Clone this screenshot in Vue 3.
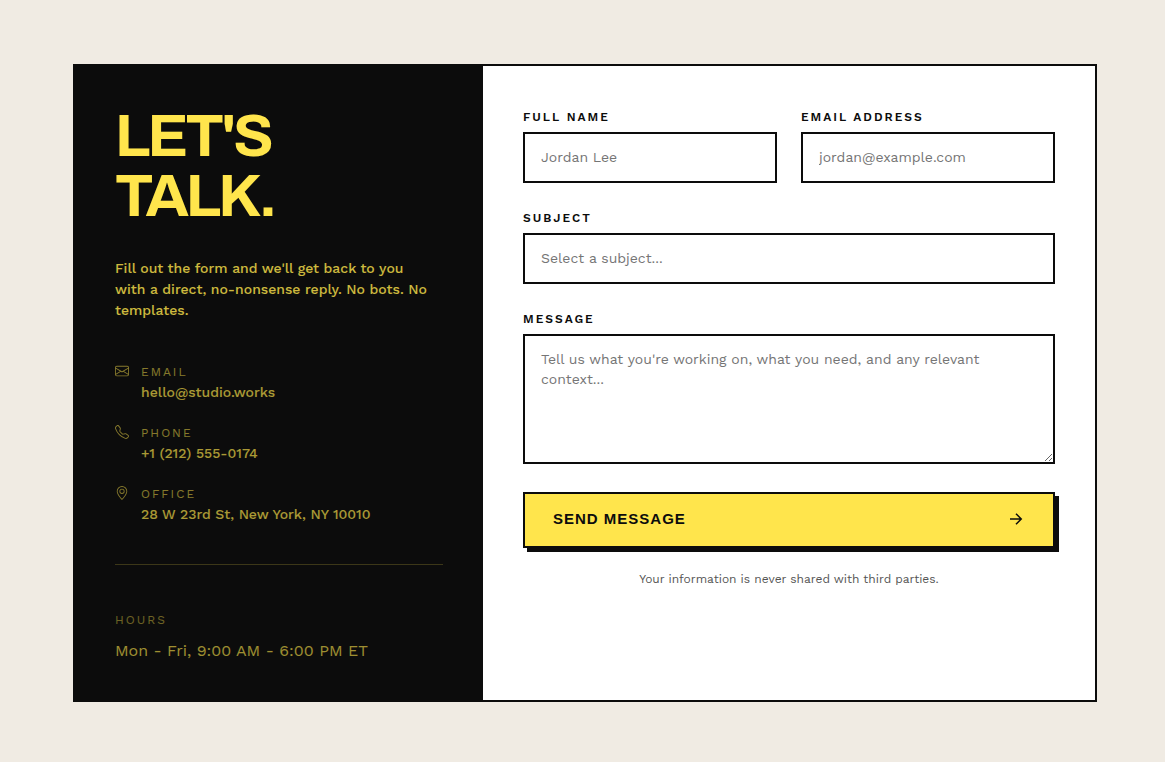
<script setup>
import { ref } from 'vue'

const contacts = [
  { id: 'email', label: 'Email', value: 'hello@studio.works' },
  { id: 'phone', label: 'Phone', value: '+1 (212) 555-0174' },
  { id: 'office', label: 'Office', value: '28 W 23rd St, New York, NY 10010' },
]

const icons = {
  email:
    'M0 4a2 2 0 0 1 2-2h12a2 2 0 0 1 2 2v8a2 2 0 0 1-2 2H2a2 2 0 0 1-2-2V4Zm2-1a1 1 0 0 0-1 1v.217l7 4.2 7-4.2V4a1 1 0 0 0-1-1H2Zm13 2.383-4.708 2.825L15 11.105V5.383Zm-.034 6.876-5.64-3.471L8 9.583l-1.326-.795-5.64 3.47A1 1 0 0 0 2 13h12a1 1 0 0 0 .966-.741ZM1 11.105l4.708-2.897L1 5.383v5.722Z',
  phone:
    'M3.654 1.328a.678.678 0 0 0-1.015-.063L1.605 2.3c-.483.484-.661 1.169-.45 1.77a17.568 17.568 0 0 0 4.168 6.608 17.569 17.569 0 0 0 6.608 4.168c.601.211 1.286.033 1.77-.45l1.034-1.034a.678.678 0 0 0-.063-1.015l-2.307-1.794a.678.678 0 0 0-.58-.122l-2.19.547a1.745 1.745 0 0 1-1.657-.459L5.482 8.062a1.745 1.745 0 0 1-.46-1.657l.548-2.19a.678.678 0 0 0-.122-.58L3.654 1.328ZM1.884.511a1.745 1.745 0 0 1 2.612.163L6.29 2.98c.329.423.445.974.315 1.494l-.547 2.19a.678.678 0 0 0 .178.643l2.457 2.457a.678.678 0 0 0 .644.178l2.189-.547a1.745 1.745 0 0 1 1.494.315l2.306 1.794c.829.645.905 1.87.163 2.611l-1.034 1.034c-.74.74-1.846 1.065-2.877.702a18.634 18.634 0 0 1-7.01-4.42 18.634 18.634 0 0 1-4.42-7.009c-.362-1.03-.037-2.137.703-2.877L1.885.511Z',
  office:
    'M12.166 8.94c-.524 1.062-1.234 2.12-1.96 3.07A31.493 31.493 0 0 1 8 14.58a31.481 31.481 0 0 1-2.206-2.57c-.726-.95-1.436-2.008-1.96-3.07C3.304 7.867 3 6.862 3 6a5 5 0 0 1 10 0c0 .862-.305 1.867-.834 2.94ZM8 16s6-5.686 6-10A6 6 0 0 0 2 6c0 4.314 6 10 6 10Z M8 8a2 2 0 1 1 0-4 2 2 0 0 1 0 4Zm0 1a3 3 0 1 0 0-6 3 3 0 0 0 0 6Z',
}

const form = ref({ name: '', email: '', subject: '', message: '' })
</script>

<template>
  <main class="page">
    <div class="card">
      <section class="intro">
        <h1 class="title">LET'S<br />TALK.</h1>
        <p class="lead">
          Fill out the form and we'll get back to you with a direct, no-nonsense reply. No bots. No templates.
        </p>
        <ul class="contacts">
          <li v-for="item in contacts" :key="item.id" class="contact">
            <svg class="contact-icon" viewBox="0 0 16 16" aria-hidden="true">
              <path :d="icons[item.id]" />
            </svg>
            <div>
              <div class="contact-label">{{ item.label }}</div>
              <div class="contact-value">{{ item.value }}</div>
            </div>
          </li>
        </ul>
        <div class="hours">
          <div class="hours-label">Hours</div>
          <div class="hours-value">Mon - Fri, 9:00 AM - 6:00 PM ET</div>
        </div>
      </section>

      <form class="form" @submit.prevent>
        <div class="row">
          <div class="field">
            <label for="name">Full name</label>
            <input id="name" v-model="form.name" type="text" placeholder="Jordan Lee" />
          </div>
          <div class="field">
            <label for="email">Email address</label>
            <input id="email" v-model="form.email" type="email" placeholder="jordan@example.com" />
          </div>
        </div>
        <div class="field">
          <label for="subject">Subject</label>
          <input id="subject" v-model="form.subject" type="text" placeholder="Select a subject..." />
        </div>
        <div class="field">
          <label for="message">Message</label>
          <textarea
            id="message"
            v-model="form.message"
            placeholder="Tell us what you're working on, what you need, and any relevant context..."
          ></textarea>
        </div>
        <button class="send" type="submit">
          <span>Send message</span>
          <svg class="arrow" viewBox="0 0 24 24" aria-hidden="true">
            <path d="M4 12h15M12 5l7 7-7 7" />
          </svg>
        </button>
        <p class="note">Your information is never shared with third parties.</p>
      </form>
    </div>
  </main>
</template>

<style>
body {
  margin: 0;
  background: #f0ebe3;
}
</style>

<style scoped>
* {
  box-sizing: border-box;
}

.page {
  display: flex;
  min-height: 100vh;
  padding: 64px 68px 60px 73px;
  background: #f0ebe3;
  color: #0c0c0c;
  font-family: "Work Sans", Inter, sans-serif;
}

.card {
  display: grid;
  grid-template-columns: 2fr 3fr;
  flex: 1;
  border: 2px solid #0c0c0c;
  background: #fff;
}

.intro {
  display: flex;
  flex-direction: column;
  padding: 40px;
  background: #0c0c0c;
  color: #ffe54c;
}

.title {
  margin: 0 0 32px;
  font: 700 60px/60px Archivo, "Liberation Sans", Arial, sans-serif;
  letter-spacing: -3px;
}

.lead {
  max-width: 320px;
  margin: 0 0 40px;
  font-size: 14px;
  font-weight: 500;
  line-height: 21px;
  opacity: 0.8;
}

.contacts {
  display: flex;
  flex-direction: column;
  gap: 20px;
  margin: 0 0 40px;
  padding: 0;
  list-style: none;
}

.contact {
  display: flex;
  gap: 12px;
}

.contact-icon {
  width: 14px;
  height: 14px;
  margin-top: 3px;
  fill: currentColor;
  opacity: 0.5;
}

.contact-label,
.hours-label {
  font-size: 12px;
  font-weight: 400;
  line-height: 22px;
  letter-spacing: 2px;
  text-transform: uppercase;
}

.contact-label {
  opacity: 0.5;
}

.contact-value {
  font-size: 14px;
  font-weight: 500;
  line-height: 19px;
  opacity: 0.65;
}

.hours {
  padding-top: 44px;
  border-top: 1px solid rgba(255, 229, 76, 0.2);
}

.hours-label {
  margin-bottom: 11px;
  opacity: 0.4;
}

.hours-value {
  font-size: 16px;
  font-weight: 400;
  line-height: 18px;
  opacity: 0.6;
}

.form {
  display: flex;
  flex-direction: column;
  gap: 24px;
  min-width: 0;
  padding: 40px;
}

.row {
  display: grid;
  grid-template-columns: 1fr 1fr;
  gap: 24px;
}

.field {
  display: flex;
  flex-direction: column;
  gap: 4px;
  min-width: 0;
}

label {
  font-size: 12px;
  font-weight: 600;
  line-height: 22px;
  letter-spacing: 2px;
  text-transform: uppercase;
}

input,
textarea {
  width: 100%;
  padding: 13px 16px 15px;
  border: 2px solid #0c0c0c;
  border-radius: 0;
  outline: 0;
  background: #fff;
  color: #0c0c0c;
  font: 400 14px/20px "Work Sans", Inter, sans-serif;
}

input {
  height: 51px;
}

textarea {
  display: block;
  height: 130px;
  resize: vertical;
}

input::placeholder,
textarea::placeholder {
  color: #757575;
}

.send {
  display: flex;
  align-items: center;
  justify-content: space-between;
  height: 56px;
  margin-top: 4px;
  padding: 0 28px 2px;
  border: 2px solid #0c0c0c;
  border-radius: 0;
  background: #ffe54c;
  box-shadow: 4px 4px 0 #0c0c0c;
  color: #0c0c0c;
  font: 700 15px/20px "Liberation Sans", Arial, sans-serif;
  letter-spacing: 1px;
  text-transform: uppercase;
  cursor: pointer;
}

.arrow {
  width: 18px;
  height: 18px;
  fill: none;
  stroke: currentColor;
  stroke-width: 2;
}

.note {
  margin: 0;
  font-size: 12px;
  line-height: 14px;
  text-align: center;
  color: #555;
}
</style>
